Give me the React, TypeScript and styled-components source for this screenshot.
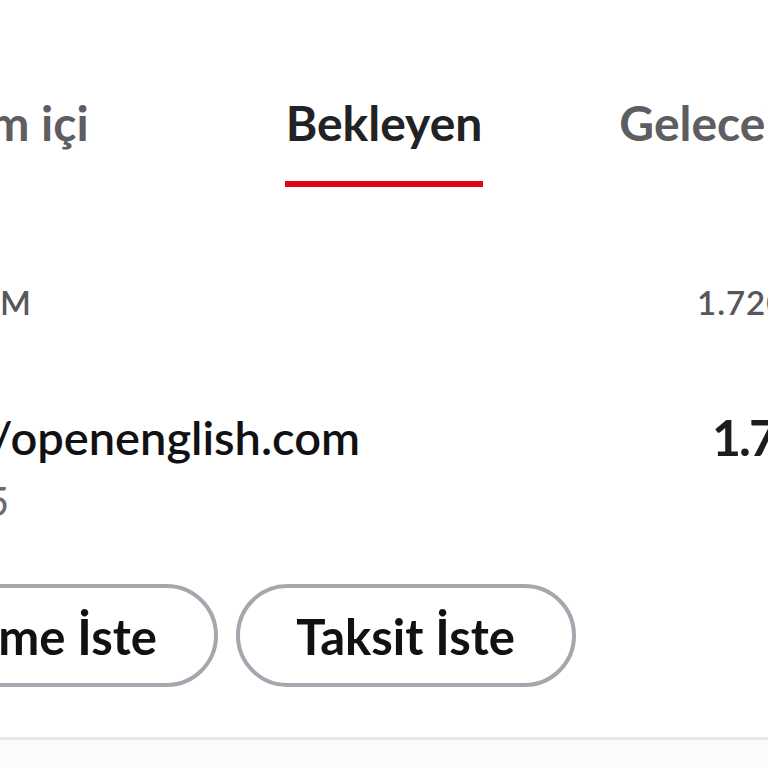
import React from "react";
import styled, { createGlobalStyle } from "styled-components";

const GlobalStyle = createGlobalStyle`
  html, body {
    margin: 0;
    padding: 0;
    background: #ffffff;
    overflow: hidden;
  }
  * {
    box-sizing: border-box;
  }
`;

const tabs = [
  { label: "Dönem içi", active: false },
  { label: "Bekleyen", active: true },
  { label: "Gelecek dönem", active: false },
];

export default function App() {
  return (
    <>
      <GlobalStyle />
      <Screen>
        <TabBar>
          {tabs.map((t, i) => (
            <TabCell key={t.label} $pos={i}>
              <Tab $active={t.active}>{t.label}</Tab>
            </TabCell>
          ))}
        </TabBar>

        <SummaryRow>
          <SummaryLabel>M</SummaryLabel>
          <SummaryAmount>1.720,00 TL</SummaryAmount>
        </SummaryRow>

        <TransactionRow>
          <Merchant>/openenglish.com</Merchant>
          <Amount>1.720,00 TL</Amount>
        </TransactionRow>
        <TransactionDate>5</TransactionDate>

        <Actions>
          <PillButton>Ödeme İste</PillButton>
          <PillButton>Taksit İste</PillButton>
        </Actions>

        <Footer />
      </Screen>
    </>
  );
}

const Screen = styled.div`
  width: 768px;
  height: 768px;
  overflow: hidden;
  display: flex;
  flex-direction: column;
  font-family: "Lato", "Noto Sans", sans-serif;
  background: #ffffff;
`;

const TabBar = styled.div`
  display: grid;
  grid-template-columns: minmax(0, 1fr) auto minmax(0, 1fr);
  padding-top: 92px;
  height: 187px;
`;

const TabCell = styled.div<{ $pos: number }>`
  display: flex;
  min-width: 0;
  justify-content: ${(p) => (p.$pos === 0 ? "flex-end" : "flex-start")};
  padding-right: ${(p) => (p.$pos === 0 ? "197px" : "0")};
  padding-left: ${(p) => (p.$pos === 2 ? "137px" : "0")};
`;

const Tab = styled.div<{ $active: boolean }>`
  position: relative;
  flex: none;
  font-size: 48px;
  font-weight: 700;
  line-height: 62px;
  height: 95px;
  white-space: nowrap;
  color: ${(p) => (p.$active ? "#222225" : "#5d5d62")};

  &::after {
    content: "";
    display: ${(p) => (p.$active ? "block" : "none")};
    position: absolute;
    left: -1px;
    right: -1px;
    bottom: 0;
    height: 6px;
    background: #e20613;
  }
`;

const SummaryRow = styled.div`
  display: flex;
  align-items: center;
  margin-top: 90px;
  height: 50px;
  font-size: 33px;
  font-weight: 600;
  color: #56565b;
`;

const SummaryLabel = styled.div`
  flex: 1;
  white-space: nowrap;
`;

const SummaryAmount = styled.div`
  flex: none;
  width: 71px;
  white-space: nowrap;
  letter-spacing: 1px;
`;

const TransactionRow = styled.div`
  display: flex;
  align-items: center;
  margin-top: 80px;
  height: 60px;
  color: #111114;
`;

const Merchant = styled.div`
  flex: 1;
  margin-left: -9px;
  white-space: nowrap;
  font-size: 47px;
  font-weight: 600;
`;

const Amount = styled.div`
  flex: none;
  width: 56px;
  white-space: nowrap;
  font-size: 50px;
  font-weight: 700;
  letter-spacing: -2px;
  color: #1c1c1f;
`;

const TransactionDate = styled.div`
  margin-top: 14px;
  margin-left: -14px;
  font-size: 40px;
  line-height: 40px;
  color: #6a6a70;
`;

const Actions = styled.div`
  display: flex;
  gap: 18px;
  margin-top: 63px;
  margin-left: -122px;
`;

const PillButton = styled.button`
  flex: 0 0 340px;
  height: 103px;
  display: flex;
  align-items: center;
  justify-content: flex-end;
  padding: 0 57px 0 0;
  border: 4px solid #a7a6ae;
  border-radius: 52px;
  background: #ffffff;
  font-family: "Lato", "Noto Sans", sans-serif;
  font-size: 49px;
  font-weight: 700;
  white-space: nowrap;
  color: #111114;
`;

const Footer = styled.div`
  margin-top: 50px;
  flex: 1;
  border-top: 3px solid #e8e8e8;
  background: #fbfbfb;
`;
